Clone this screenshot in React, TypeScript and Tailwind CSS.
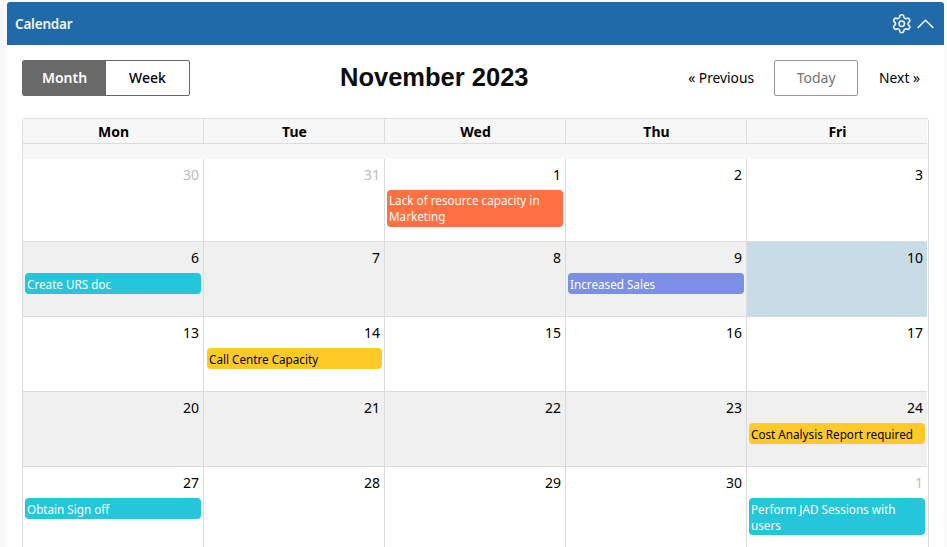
import { Settings } from "lucide-react"

type Day = {
  num: number
  other?: boolean
  today?: boolean
  event?: { title: string; className: string }
}

const teal = "bg-[#26c6da] text-white pt-[3px] pb-[2px]"
const yellow = "bg-[#ffca28] text-black pt-[3px] pb-[2px]"
const orange = "bg-[#ff7043] text-white pt-[2px] pb-[3px]"
const violet = "bg-[#7b8fe4] text-white pt-[3px] pb-[2px]"

const weekdays = ["Mon", "Tue", "Wed", "Thu", "Fri"]

const weeks: { height: string; days: Day[] }[] = [
  {
    height: "h-[83px]",
    days: [
      { num: 30, other: true },
      { num: 31, other: true },
      { num: 1, event: { title: "Lack of resource capacity in Marketing", className: orange } },
      { num: 2 },
      { num: 3 },
    ],
  },
  {
    height: "h-[75px]",
    days: [
      { num: 6, event: { title: "Create URS doc", className: teal } },
      { num: 7 },
      { num: 8 },
      { num: 9, event: { title: "Increased Sales", className: violet } },
      { num: 10, today: true },
    ],
  },
  {
    height: "h-[75px]",
    days: [
      { num: 13 },
      { num: 14, event: { title: "Call Centre Capacity", className: `${yellow} ml-px` } },
      { num: 15 },
      { num: 16 },
      { num: 17 },
    ],
  },
  {
    height: "h-[75px]",
    days: [
      { num: 20 },
      { num: 21 },
      { num: 22 },
      { num: 23 },
      { num: 24, event: { title: "Cost Analysis Report required", className: yellow } },
    ],
  },
  {
    height: "h-[83px]",
    days: [
      { num: 27, event: { title: "Obtain Sign off", className: teal } },
      { num: 28 },
      { num: 29 },
      { num: 30 },
      { num: 1, other: true, event: { title: "Perform JAD Sessions with users", className: teal } },
    ],
  },
]

const columns = "grid grid-cols-[181px_181px_181px_181px_180px]"

const DayCell = ({ day, shaded }: { day: Day; shaded: boolean }) => {
  const bg = day.today ? "bg-[#c8dce7]" : shaded ? "bg-[#f0f0f0]" : "bg-white"
  return (
    <div className={`${bg} border-r border-b border-[#dcdcdc] last:border-r-0 pt-[6px] px-[2px]`}>
      <div className={`h-5 pr-[2px] text-right text-[14px] leading-5 ${day.other ? "text-[#bdbdbd]" : "text-black"}`}>{day.num}</div>
      {day.event && (
        <div className={`mt-[5px] rounded-[4px] pl-[2px] pr-2 text-[11.7px] leading-4 ${day.event.className}`}>
          {day.event.title}
        </div>
      )}
    </div>
  )
}

const App = () => {
  return (
    <div className="h-[547px] w-[947px] overflow-hidden border-l-4 border-[#f7f7f7] bg-[#fafafa] pt-[2px] pl-[3px] pr-[3px] font-['Noto_Sans','Open_Sans',sans-serif]">
      <div className="h-[600px] bg-white rounded-t-[3px] overflow-hidden">
        <div className="flex h-[43px] items-center justify-between bg-[#206aaa] pl-2 pr-[10px] text-[#f3f6fa]">
          <span className="pt-px text-[13.5px] font-semibold tracking-[-0.2px]">Calendar</span>
          <div className="flex items-center gap-[5px]">
            <Settings size={21.5} strokeWidth={1.8} />
            <svg width="17" height="10" viewBox="0 0 17 10" fill="none" stroke="currentColor" strokeWidth="1.5">
              <path d="M0.7 8.9L8.5 1.3l7.8 7.6" />
            </svg>
          </div>
        </div>

        <div className="flex items-center pt-[15px] pl-[15px] pr-4">
          <div className="flex h-9 w-[168px] overflow-hidden rounded-[2px] border border-[#696969] text-[14px]">
            <button className="w-[83px] bg-[#696969] pb-[2px] font-semibold text-white">Month</button>
            <button className="flex-1 pb-[2px] font-medium text-black">Week</button>
          </div>
          <h2 className="ml-[150px] pb-[3px] font-['Liberation_Sans',Arial,sans-serif] text-[25.5px] leading-8 font-bold text-[#0c0c0c] whitespace-nowrap">November 2023</h2>
          <div className="ml-auto flex items-center text-[13.8px] text-black whitespace-nowrap">
            <span>« Previous</span>
            <button className="ml-5 mr-[21px] h-9 w-[84px] rounded-[2px] border border-[#999] pb-[2px] text-[14px] text-[#757575]">Today</button>
            <span className="mr-2">Next »</span>
          </div>
        </div>

        <div className="mt-[22px] ml-[15px] w-[907px] rounded-t-[3px] border border-[#dcdcdc] pr-px">
          <div className={`${columns} h-[25px] border-b border-[#dcdcdc] bg-[#f7f7f7]`}>
            {weekdays.map((name) => (
              <div key={name} className="border-r border-[#dcdcdc] pl-px text-center text-[14px] leading-[25px] font-bold text-black last:border-r-0">
                {name}
              </div>
            ))}
          </div>
          <div className="-mr-px h-[15px] bg-[#f7f7f7]" />
          {weeks.map((week, i) => (
            <div key={i} className={`${columns} ${week.height}`}>
              {week.days.map((day) => (
                <DayCell key={day.num} day={day} shaded={i % 2 === 1} />
              ))}
            </div>
          ))}
        </div>
      </div>
    </div>
  )
}

export default App
